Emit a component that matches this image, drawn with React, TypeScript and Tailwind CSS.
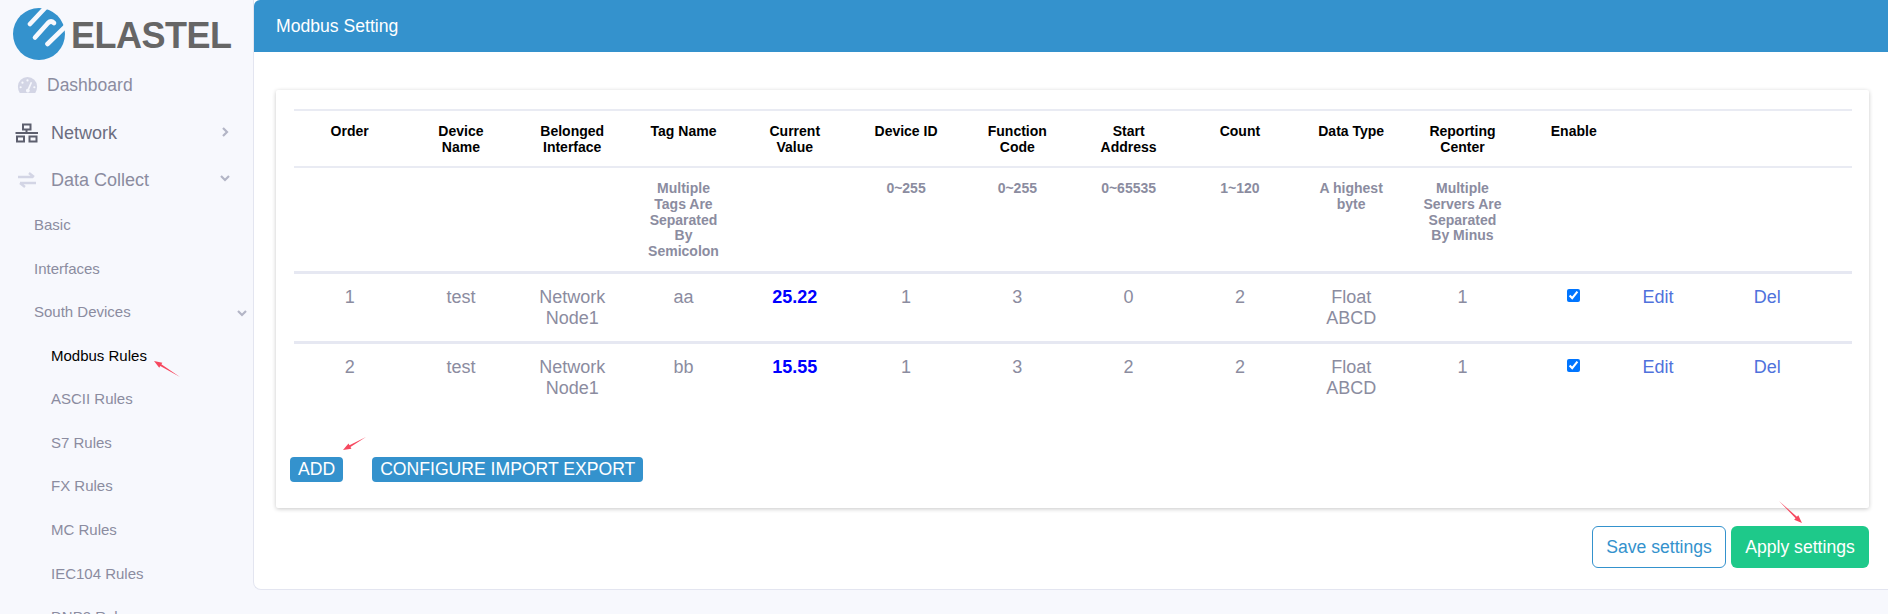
const font = "font-['Liberation_Sans',Arial,sans-serif]";

const heads = [
  ['Order', ''],
  ['Device Name', ''],
  ['Belonged Interface', ''],
  ['Tag Name', 'Multiple Tags Are Separated By Semicolon'],
  ['Current Value', ''],
  ['Device ID', '0~255'],
  ['Function Code', '0~255'],
  ['Start Address', '0~65535'],
  ['Count', '1~120'],
  ['Data Type', 'A highest byte'],
  ['Reporting Center', 'Multiple Servers Are Separated By Minus'],
  ['Enable', ''],
  ['', ''],
  ['', ''],
];

const rows = [
  { order: '1', tag: 'aa', value: '25.22', start: '0' },
  { order: '2', tag: 'bb', value: '15.55', start: '2' },
];

const subItems = ['ASCII Rules', 'S7 Rules', 'FX Rules', 'MC Rules', 'IEC104 Rules', 'DNP3 Rules'];

function Logo() {
  return (
    <svg width="52" height="52" viewBox="0 0 52 52" className="shrink-0">
      <circle cx="26" cy="26" r="26" fill="#3492cd" />
      <g stroke="#f7f8fd" strokeWidth="4.6" fill="none" strokeLinecap="round" strokeLinejoin="round">
        <path d="M17 16 L33 -1" />
        <path d="M22 29.5 L35 15 Q38 12 41 15" />
        <path d="M34.5 36 L54 17" />
      </g>
    </svg>
  );
}

function Chevron({ down, className }: { down?: boolean; className?: string }) {
  return (
    <svg width="12" height="12" viewBox="0 0 12 12" className={className}>
      <path d={down ? 'M2 4 L6 8 L10 4' : 'M4 2 L8 6 L4 10'} fill="none" stroke="#b3b5c6" strokeWidth="2.2" />
    </svg>
  );
}

function Arrow({ className, x1, y1, x2, y2 }: { className: string; x1: number; y1: number; x2: number; y2: number }) {
  // thin tail, thicker toward the head
  const dx = x2 - x1;
  const dy = y2 - y1;
  const len = Math.hypot(dx, dy);
  const nx = -dy / len;
  const ny = dx / len;
  const bx = x2 - (dx / len) * 8;
  const by = y2 - (dy / len) * 8;
  const pts = [
    [x1, y1],
    [bx + nx * 1, by + ny * 1],
    [bx + nx * 3, by + ny * 3],
    [x2, y2],
    [bx - nx * 3, by - ny * 3],
    [bx - nx * 1, by - ny * 1],
  ].map(p => p.join(',')).join(' ');
  return (
    <svg width="30" height="26" viewBox="0 0 30 26" className={className}>
      <polygon points={pts} fill="#f6485f" />
    </svg>
  );
}

export default function App() {
  return (
    <div className={`${font} relative flex h-[614px] w-[1888px] overflow-hidden bg-[#f7f8fd]`}>
      <aside className="flex h-[614px] w-[253px] shrink-0 flex-col overflow-hidden">
        <div className="flex h-[61px] shrink-0 items-end pb-[1px] pl-[13px]">
          <Logo />
          <span className="mb-[6px] ml-[6px] text-[36px] leading-[36px] font-bold tracking-[-0.5px] text-[#666666]">ELASTEL</span>
        </div>

        <div className="flex h-[48px] shrink-0 items-center pl-[17px] text-[17.5px] text-[#8b8ca0]">
          <svg width="21" height="16" viewBox="0 1 22 17.5" className="mr-[9px]">
            <path fillRule="evenodd" fill="#d3d5e5" d="M11 1 a10.5 10.5 0 0 0 -10.5 10.5 q0 4 2 7 h17 q2 -3 2 -7 A10.5 10.5 0 0 0 11 1z M11 3.5 a1.2 1.2 0 1 1 0 2.4 a1.2 1.2 0 1 1 0 -2.4z M5.5 6 a1.2 1.2 0 1 1 0 2.4 a1.2 1.2 0 1 1 0 -2.4z M3.5 11 a1.2 1.2 0 1 1 0 2.4 a1.2 1.2 0 1 1 0 -2.4z M18.5 11 a1.2 1.2 0 1 1 0 2.4 a1.2 1.2 0 1 1 0 -2.4z M14.5 6.5 l1.6 .6 l-3.2 7.5 a2 2 0 1 1 -1.7 -.7z" />
          </svg>
          Dashboard
        </div>

        <div className="flex h-[48px] shrink-0 items-center justify-between pl-[15px] pr-[22px] text-[18px] text-[#6c6d80]">
          <span className="flex items-center">
            <svg width="24" height="20" viewBox="0 0 24 20" className="mr-[12px]">
              <g fill="none" stroke="#5d5f6e" strokeWidth="2">
                <rect x="8" y="1.5" width="7.5" height="5" />
                <rect x="2" y="13.5" width="7" height="5" />
                <rect x="14.5" y="13.5" width="7" height="5" />
                <path d="M0.5 10 H23 M11.5 7 V10" />
              </g>
            </svg>
            Network
          </span>
          <Chevron className="-mt-[2px]" />
        </div>

        <div className="flex h-[46px] shrink-0 items-center justify-between pl-[17px] pr-[22px] text-[18px] text-[#8b8ca0]">
          <span className="flex items-center">
            <svg width="20" height="16" viewBox="0 0 20 16" className="mr-[14px]">
              <path d="M1 5 H16 M12 1 L17 5 M19 11 H3 M8 15 L3 11" fill="none" stroke="#d3d5e5" strokeWidth="2.4" />
            </svg>
            Data Collect
          </span>
          <Chevron down className="-mt-[4px]" />
        </div>

        <div className="flex h-[45px] shrink-0 items-center pl-[34px] text-[15px] text-[#8b8ca0]">Basic</div>
        <div className="flex h-[43px] shrink-0 items-center pl-[34px] text-[15px] text-[#8b8ca0]">Interfaces</div>
        <div className="flex h-[43px] shrink-0 items-center justify-between pl-[34px] pr-[5px] text-[15px] text-[#8b8ca0]">
          South Devices
          <Chevron down />
        </div>
        <div className="flex h-[43.6px] shrink-0 items-center pl-[51px] text-[15px] text-black">Modbus Rules</div>
        {subItems.map(s => (
          <div key={s} className="flex h-[43.6px] shrink-0 items-center pl-[51px] text-[15px] text-[#8b8ca0]">{s}</div>
        ))}
      </aside>

      <div className="h-[590px] w-[1635px] shrink-0 rounded-bl-[8px] border-b border-l border-[#e3e5f0] bg-white">
        <header className="flex h-[52px] items-center rounded-tl-[6px] bg-[#3492cd] pl-[22px] text-[17.6px] text-white">
          Modbus Setting
        </header>

        <div className="pl-[22px] pr-[19px] pt-[38px]">
          <div className="h-[418px] rounded-[2px] bg-white pl-[18px] pr-[17px] pt-[19px] shadow-[0_1px_4px_rgba(0,0,0,0.22)]">
            <table className="w-full table-fixed border-collapse">
              <tbody>
                <tr className="border-t-2 border-[#e9ebf3]">
                  {heads.map((h, i) => (
                    <th key={i} className="h-[57px] px-[14px] pt-[12px] align-top text-[14px] leading-[16px] font-bold text-black">{h[0]}</th>
                  ))}
                </tr>
                <tr className="border-t-2 border-[#e9ebf3]">
                  {heads.map((h, i) => (
                    <th key={i} className="h-[105px] px-[14px] pt-[13px] align-top text-[14px] leading-[15.8px] font-bold text-[#8b8ca0]">{h[1]}</th>
                  ))}
                </tr>
                {rows.map(r => (
                  <tr key={r.order} className="border-t-[3px] border-[#e6e8f2] text-[18px] leading-[21px] text-[#8b8ca0]">
                    {[r.order, 'test', 'Network Node1', r.tag].map((c, i) => (
                      <td key={i} className="h-[67px] px-[17px] pt-[13px] pb-[12px] text-center align-top">{c}</td>
                    ))}
                    <td className="px-[17px] pt-[13px] text-center align-top font-bold text-[#0000ff]">{r.value}</td>
                    {['1', '3', r.start, '2', 'Float ABCD', '1'].map((c, i) => (
                      <td key={i} className="px-[17px] pt-[13px] text-center align-top">{c}</td>
                    ))}
                    <td className="px-[17px] pt-[13px] text-center align-top">
                      <input type="checkbox" checked readOnly className="m-0 -ml-[1px] align-[1px]" />
                    </td>
                    <td className="pl-[13px] pt-[13px] align-top text-[#4f72dc]">Edit</td>
                    <td className="pl-[13px] pt-[13px] align-top text-[#4f72dc]">Del</td>
                  </tr>
                ))}
              </tbody>
            </table>
            <div className="mt-[46px] flex gap-[29px]">
              <button className="-ml-[4px] h-[25px] rounded-[4px] bg-[#3492cd] px-[8px] text-[17.6px] leading-[25px] text-white">ADD</button>
              <button className="h-[25px] rounded-[4px] bg-[#3492cd] px-[8px] text-[17.6px] leading-[25px] text-white">CONFIGURE IMPORT EXPORT</button>
            </div>
          </div>
          <div className="mt-[18px] flex justify-end gap-[5px]">
            <button className="h-[42px] w-[134px] rounded-[6px] border border-[#3492cd] bg-white text-[17.6px] text-[#3492cd]">Save settings</button>
            <button className="h-[42px] w-[138px] rounded-[6px] bg-[#1ec98a] text-[17.6px] text-white">Apply settings</button>
          </div>
        </div>
      </div>

      <Arrow className="absolute left-[153px] top-[358px]" x1={27} y1={19} x2={1} y2={3} />
      <Arrow className="absolute left-[340px] top-[434px]" x1={26} y1={3} x2={3} y2={16} />
      <Arrow className="absolute left-[1777px] top-[499px]" x1={2} y1={2} x2={25} y2={24} />
    </div>
  );
}
